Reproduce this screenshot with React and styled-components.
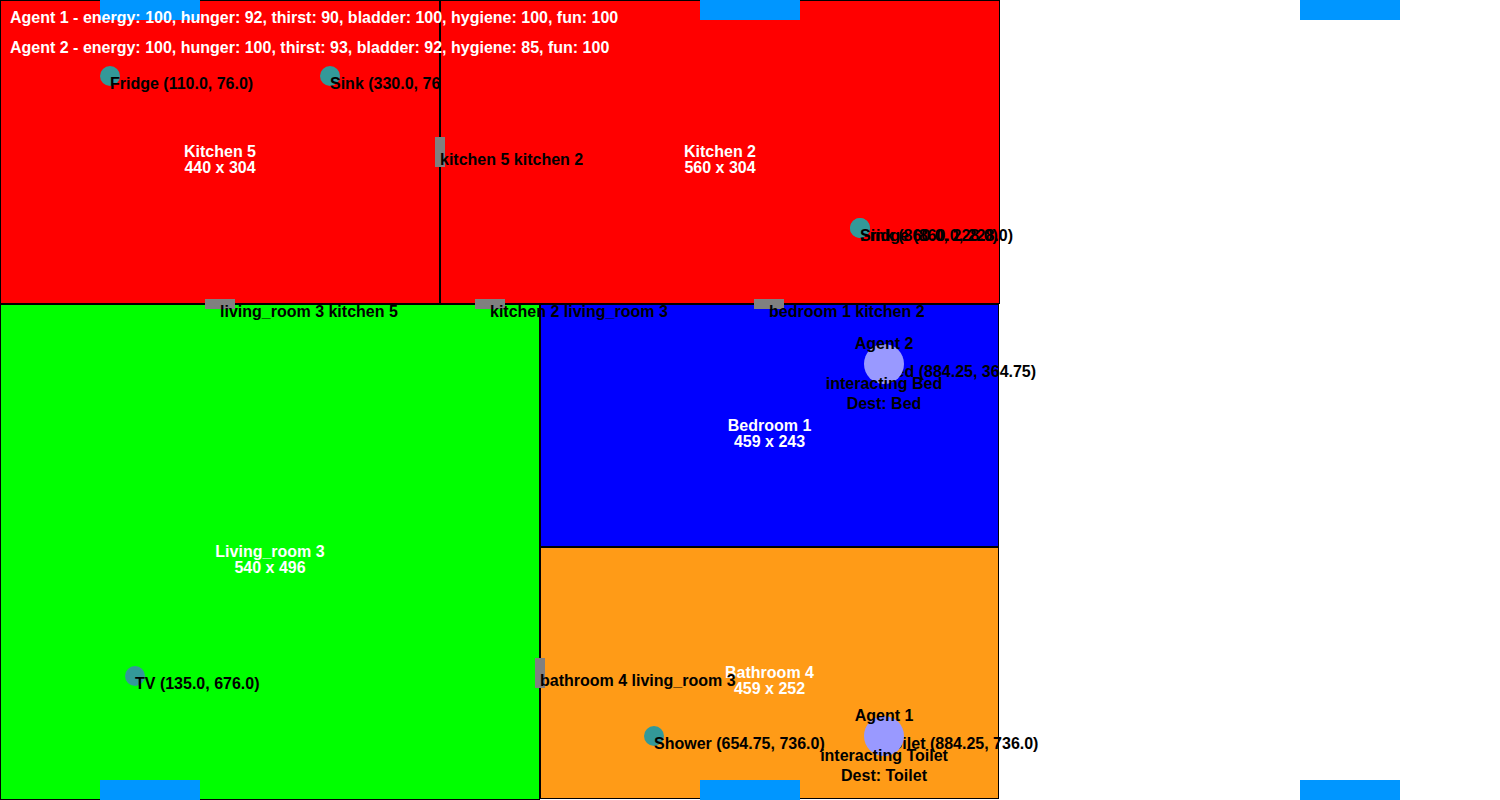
import React from "react";
import styled, { createGlobalStyle } from "styled-components";

const WORLD = { width: 1500, height: 800 };

const kitchen5 = {
  name: "Kitchen 5", color: "#ff0000", x: 0, y: 0, width: 440, height: 304,
  items: [
    { label: "Fridge (110.0, 76.0)", x: 110, y: 76 },
    { label: "Sink (330.0, 76.0)", x: 330, y: 76 },
  ],
};

const kitchen2 = {
  name: "Kitchen 2", color: "#ff0000", x: 440, y: 0, width: 560, height: 304,
  items: [
    { label: "Fridge (860.0, 228.0)", x: 860, y: 228 },
    { label: "Sink (860.0, 228.0)", x: 860, y: 228 },
  ],
};

const livingRoom = {
  name: "Living_room 3", color: "#00ff00", x: 0, y: 304, width: 540, height: 496,
  items: [{ label: "TV (135.0, 676.0)", x: 135, y: 676 }],
};

const bedroom = {
  name: "Bedroom 1", color: "#0000ff", x: 540, y: 304, width: 459, height: 243,
  items: [{ label: "Bed (884.25, 364.75)", x: 884, y: 364 }],
};

const bathroom = {
  name: "Bathroom 4", color: "#ff9b17", x: 540, y: 547, width: 459, height: 252,
  items: [
    { label: "Shower (654.75, 736.0)", x: 654, y: 736 },
    { label: "Toilet (884.25, 736.0)", x: 884, y: 736 },
  ],
};

const doors = [
  { label: "kitchen 5 kitchen 2", x: 440, y: 152, vertical: true },
  { label: "living_room 3 kitchen 5", x: 220, y: 304 },
  { label: "kitchen 2 living_room 3", x: 490, y: 304 },
  { label: "bedroom 1 kitchen 2", x: 769, y: 304 },
  { label: "bathroom 4 living_room 3", x: 540, y: 673, vertical: true },
];

const panes = [150, 750, 1350];

const agents = [
  {
    name: "Agent 1", x: 884, y: 736, target: "Toilet",
    needs: { energy: 100, hunger: 92, thirst: 90, bladder: 100, hygiene: 100, fun: 100 },
  },
  {
    name: "Agent 2", x: 884, y: 364, target: "Bed",
    needs: { energy: 100, hunger: 100, thirst: 93, bladder: 92, hygiene: 85, fun: 100 },
  },
];

const GlobalStyle = createGlobalStyle`
  body {
    margin: 0;
    background: #ffffff;
    color: #000000;
    font: bold 16px/16px "Liberation Sans", Arial, sans-serif;
  }
`;

const World = styled.main`
  position: relative;
  height: 100vh;
  overflow: hidden;
`;

const House = styled.div`
  display: grid;
  grid-template-rows: 304fr 496fr;
  width: calc(100% * 2 / 3);
  height: 100%;
`;

const Floor = styled.div`
  display: grid;
  grid-template-columns: ${({ $columns }) => $columns};
  min-height: 0;
`;

const Wing = styled.div`
  display: grid;
  grid-template-rows: 243fr 252fr 1fr;
  min-height: 0;
`;

const RoomArea = styled.section`
  position: relative;
  display: flex;
  align-items: center;
  justify-content: center;
  box-sizing: border-box;
  min-width: 0;
  min-height: 0;
  padding-top: 16px;
  background: ${({ $color }) => $color};
  box-shadow: inset 0 0 0 1px #000000;
`;

const RoomTitle = styled.h2`
  margin: 0;
  color: #ffffff;
  font: inherit;
  text-align: center;
`;

const TitleLine = styled.span`
  display: block;
`;

const Pin = styled.div`
  position: absolute;
  width: 0;
  height: 0;
`;

const Dot = styled.span`
  position: absolute;
  top: ${({ $size }) => -$size / 2}px;
  left: ${({ $size }) => -$size / 2}px;
  width: ${({ $size }) => $size}px;
  height: ${({ $size }) => $size}px;
  border-radius: 50%;
  background: ${({ $color }) => $color};
`;

const DoorLeaf = styled.span`
  position: absolute;
  top: ${({ $vertical }) => ($vertical ? -15 : -5)}px;
  left: ${({ $vertical }) => ($vertical ? -5 : -15)}px;
  width: ${({ $vertical }) => ($vertical ? 10 : 30)}px;
  height: ${({ $vertical }) => ($vertical ? 30 : 10)}px;
  background: #808080;
`;

const PinLabel = styled.span`
  position: absolute;
  top: 0;
  left: 0;
  white-space: nowrap;
`;

const AgentLabel = styled.span`
  position: absolute;
  top: ${({ $offset }) => $offset - 8}px;
  left: 0;
  transform: translateX(-50%);
  white-space: nowrap;
`;

const Pane = styled.div`
  position: absolute;
  ${({ $edge }) => $edge}: 0;
  width: 100px;
  height: 20px;
  margin-left: -50px;
  background: #0096ff;
`;

const Stats = styled.ul`
  position: absolute;
  top: 10px;
  left: 10px;
  display: flex;
  flex-direction: column;
  gap: 14px;
  margin: 0;
  padding: 0;
  color: #ffffff;
  list-style: none;
`;

const StatLine = styled.li`
  white-space: nowrap;
`;

const place = (point, area) => ({
  left: `${((point.x - area.x) / area.width) * 100}%`,
  top: `${((point.y - area.y) / area.height) * 100}%`,
});

const world = { x: 0, y: 0, ...WORLD };

function Room({ room }) {
  return (
    <RoomArea $color={room.color}>
      <RoomTitle>
        <TitleLine>{room.name}</TitleLine>
        <TitleLine>{`${room.width} x ${room.height}`}</TitleLine>
      </RoomTitle>
      {room.items.map((item) => (
        <Pin key={item.label} style={place(item, room)}>
          <Dot $size={20} $color="#339999" />
          <PinLabel>{item.label}</PinLabel>
        </Pin>
      ))}
    </RoomArea>
  );
}

function Door({ door }) {
  return (
    <Pin style={place(door, world)}>
      <DoorLeaf $vertical={door.vertical} />
      <PinLabel>{door.label}</PinLabel>
    </Pin>
  );
}

function Agent({ agent }) {
  return (
    <Pin style={place(agent, world)}>
      <Dot $size={40} $color="#9999ff" />
      <AgentLabel $offset={-20}>{agent.name}</AgentLabel>
      <AgentLabel $offset={20}>{`interacting ${agent.target}`}</AgentLabel>
      <AgentLabel $offset={40}>{`Dest: ${agent.target}`}</AgentLabel>
    </Pin>
  );
}

const describe = (agent) =>
  `${agent.name} - ${Object.entries(agent.needs)
    .map(([need, value]) => `${need}: ${value}`)
    .join(", ")}`;

export default function App() {
  return (
    <World>
      <GlobalStyle />
      <House>
        <Floor $columns="440fr 560fr">
          <Room room={kitchen5} />
          <Room room={kitchen2} />
        </Floor>
        <Floor $columns="540fr 459fr 1fr">
          <Room room={livingRoom} />
          <Wing>
            <Room room={bedroom} />
            <Room room={bathroom} />
          </Wing>
        </Floor>
      </House>
      {doors.map((door) => (
        <Door key={door.label} door={door} />
      ))}
      {panes.map((x) => (
        <React.Fragment key={x}>
          <Pane $edge="top" style={{ left: `${(x / WORLD.width) * 100}%` }} />
          <Pane $edge="bottom" style={{ left: `${(x / WORLD.width) * 100}%` }} />
        </React.Fragment>
      ))}
      {agents.map((agent) => (
        <Agent key={agent.name} agent={agent} />
      ))}
      <Stats>
        {agents.map((agent) => (
          <StatLine key={agent.name}>{describe(agent)}</StatLine>
        ))}
      </Stats>
    </World>
  );
}
